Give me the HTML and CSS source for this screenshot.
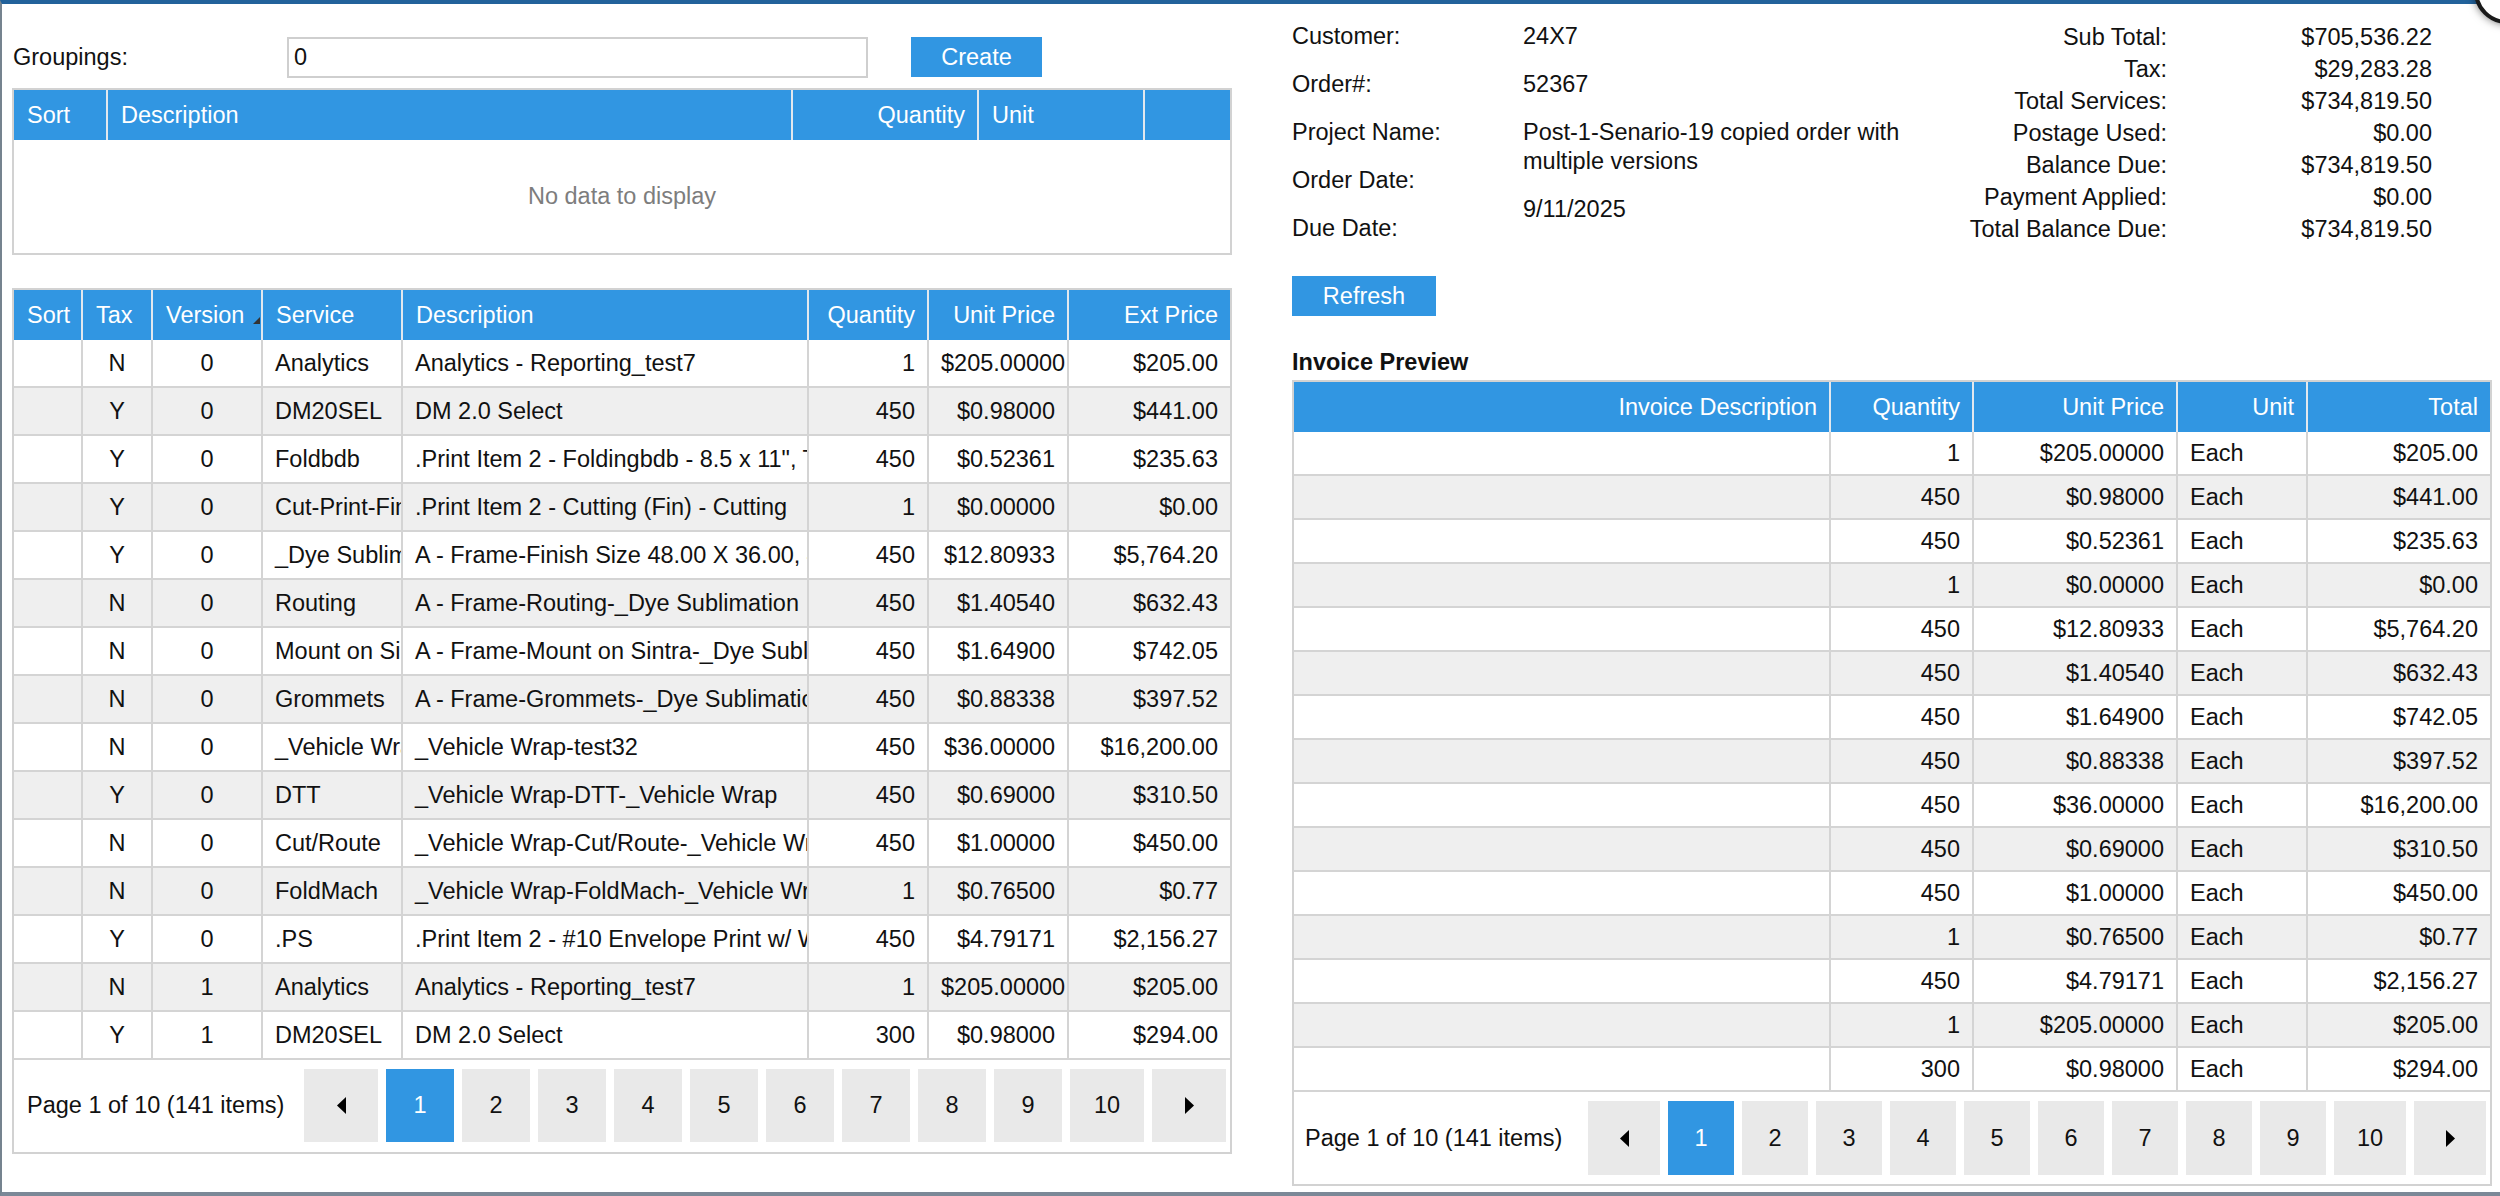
FILE: index.html
```html
<!DOCTYPE html>
<html lang="en">
<head>
    <meta charset="UTF-8">
    <title>Order Invoice</title>
    <link rel="stylesheet" href="styles.css">
</head>
<body>
    <div class="dialog">
        <!-- left: groupings and services -->
        <div class="left-panel">
            <div class="groupings-row">
                <label class="groupings-label" for="groupings">Groupings:</label>
                <input type="text" id="groupings" class="groupings-input" value="0">
                <button class="btn btn-create">Create</button>
            </div>

            <div class="grid groupings-grid">
                <table>
                    <colgroup>
                        <col style="width:94px"><col style="width:685px"><col style="width:186px"><col style="width:166px"><col style="width:85px">
                    </colgroup>
                    <thead>
                        <tr><th>Sort</th><th>Description</th><th class="num">Quantity</th><th>Unit</th><th></th></tr>
                    </thead>
                </table>
                <div class="empty">No data to display</div>
            </div>

            <div class="grid services-grid">
                <table>
                    <colgroup>
                        <col style="width:69px"><col style="width:70px"><col style="width:110px"><col style="width:140px"><col style="width:406px"><col style="width:120px"><col style="width:140px"><col style="width:161px">
                    </colgroup>
                    <thead>
                        <tr>
                            <th>Sort</th><th>Tax</th>
                            <th>Version<svg class="sort-glyph" width="9" height="9" viewBox="0 0 9 9"><polygon points="1,8 8,8 8,1" fill="#333"/></svg></th>
                            <th>Service</th><th>Description</th><th class="num">Quantity</th><th class="num">Unit Price</th><th class="num">Ext Price</th>
                        </tr>
                    </thead>
                    <tbody>
                        <tr><td></td><td class="mid">N</td><td class="mid">0</td><td>Analytics</td><td>Analytics - Reporting_test7</td><td class="num">1</td><td class="num">$205.00000</td><td class="num">$205.00</td></tr>
                        <tr><td></td><td class="mid">Y</td><td class="mid">0</td><td>DM20SEL</td><td>DM 2.0 Select</td><td class="num">450</td><td class="num">$0.98000</td><td class="num">$441.00</td></tr>
                        <tr><td></td><td class="mid">Y</td><td class="mid">0</td><td>Foldbdb</td><td>.Print Item 2 - Foldingbdb - 8.5 x 11", Tri-Fold</td><td class="num">450</td><td class="num">$0.52361</td><td class="num">$235.63</td></tr>
                        <tr><td></td><td class="mid">Y</td><td class="mid">0</td><td>Cut-Print-Fin</td><td>.Print Item 2 - Cutting (Fin) - Cutting</td><td class="num">1</td><td class="num">$0.00000</td><td class="num">$0.00</td></tr>
                        <tr><td></td><td class="mid">Y</td><td class="mid">0</td><td>_Dye Sublimation</td><td>A - Frame-Finish Size 48.00 X 36.00, 4/0</td><td class="num">450</td><td class="num">$12.80933</td><td class="num">$5,764.20</td></tr>
                        <tr><td></td><td class="mid">N</td><td class="mid">0</td><td>Routing</td><td>A - Frame-Routing-_Dye Sublimation</td><td class="num">450</td><td class="num">$1.40540</td><td class="num">$632.43</td></tr>
                        <tr><td></td><td class="mid">N</td><td class="mid">0</td><td>Mount on Sintra</td><td>A - Frame-Mount on Sintra-_Dye Sublimation</td><td class="num">450</td><td class="num">$1.64900</td><td class="num">$742.05</td></tr>
                        <tr><td></td><td class="mid">N</td><td class="mid">0</td><td>Grommets</td><td>A - Frame-Grommets-_Dye Sublimation</td><td class="num">450</td><td class="num">$0.88338</td><td class="num">$397.52</td></tr>
                        <tr><td></td><td class="mid">N</td><td class="mid">0</td><td>_Vehicle Wrap</td><td>_Vehicle Wrap-test32</td><td class="num">450</td><td class="num">$36.00000</td><td class="num">$16,200.00</td></tr>
                        <tr><td></td><td class="mid">Y</td><td class="mid">0</td><td>DTT</td><td>_Vehicle Wrap-DTT-_Vehicle Wrap</td><td class="num">450</td><td class="num">$0.69000</td><td class="num">$310.50</td></tr>
                        <tr><td></td><td class="mid">N</td><td class="mid">0</td><td>Cut/Route</td><td>_Vehicle Wrap-Cut/Route-_Vehicle Wrap</td><td class="num">450</td><td class="num">$1.00000</td><td class="num">$450.00</td></tr>
                        <tr><td></td><td class="mid">N</td><td class="mid">0</td><td>FoldMach</td><td>_Vehicle Wrap-FoldMach-_Vehicle Wrap</td><td class="num">1</td><td class="num">$0.76500</td><td class="num">$0.77</td></tr>
                        <tr><td></td><td class="mid">Y</td><td class="mid">0</td><td>.PS</td><td>.Print Item 2 - #10 Envelope Print w/ Window</td><td class="num">450</td><td class="num">$4.79171</td><td class="num">$2,156.27</td></tr>
                        <tr><td></td><td class="mid">N</td><td class="mid">1</td><td>Analytics</td><td>Analytics - Reporting_test7</td><td class="num">1</td><td class="num">$205.00000</td><td class="num">$205.00</td></tr>
                        <tr><td></td><td class="mid">Y</td><td class="mid">1</td><td>DM20SEL</td><td>DM 2.0 Select</td><td class="num">300</td><td class="num">$0.98000</td><td class="num">$294.00</td></tr>
                    </tbody>
                </table>
                <div class="pager">
                    <span class="pager-info">Page 1 of 10 (141 items)</span>
                    <div class="pager-buttons">
                        <span class="page-btn wide"><svg width="9" height="17" viewBox="0 0 9 17"><polygon points="9,0 9,17 0,8.5" fill="#000"/></svg></span>
                        <span class="page-btn active">1</span>
                        <span class="page-btn">2</span>
                        <span class="page-btn">3</span>
                        <span class="page-btn">4</span>
                        <span class="page-btn">5</span>
                        <span class="page-btn">6</span>
                        <span class="page-btn">7</span>
                        <span class="page-btn">8</span>
                        <span class="page-btn">9</span>
                        <span class="page-btn wide">10</span>
                        <span class="page-btn wide"><svg width="9" height="17" viewBox="0 0 9 17"><polygon points="0,0 0,17 9,8.5" fill="#000"/></svg></span>
                    </div>
                </div>
            </div>
        </div>

        <!-- right: order info and invoice preview -->
        <div class="right-panel">
            <div class="order-info">
                <div class="info-labels">
                    <div>Customer:</div>
                    <div>Order#:</div>
                    <div>Project Name:</div>
                    <div>Order Date:</div>
                    <div>Due Date:</div>
                </div>
                <div class="info-values">
                    <div>24X7</div>
                    <div>52367</div>
                    <div>Post-1-Senario-19 copied order with multiple versions</div>
                    <div>9/11/2025</div>
                </div>
                <div class="totals">
                    <span>Sub Total:</span><span>$705,536.22</span>
                    <span>Tax:</span><span>$29,283.28</span>
                    <span>Total Services:</span><span>$734,819.50</span>
                    <span>Postage Used:</span><span>$0.00</span>
                    <span>Balance Due:</span><span>$734,819.50</span>
                    <span>Payment Applied:</span><span>$0.00</span>
                    <span>Total Balance Due:</span><span>$734,819.50</span>
                </div>
            </div>

            <button class="btn btn-refresh">Refresh</button>

            <div class="section-title">Invoice Preview</div>
            <div class="grid invoice-grid">
                <table>
                    <colgroup>
                        <col style="width:537px"><col style="width:143px"><col style="width:204px"><col style="width:130px"><col style="width:182px">
                    </colgroup>
                    <thead>
                        <tr><th class="num">Invoice Description</th><th class="num">Quantity</th><th class="num">Unit Price</th><th class="num">Unit</th><th class="num">Total</th></tr>
                    </thead>
                    <tbody>
                        <tr><td></td><td class="num">1</td><td class="num">$205.00000</td><td>Each</td><td class="num">$205.00</td></tr>
                        <tr><td></td><td class="num">450</td><td class="num">$0.98000</td><td>Each</td><td class="num">$441.00</td></tr>
                        <tr><td></td><td class="num">450</td><td class="num">$0.52361</td><td>Each</td><td class="num">$235.63</td></tr>
                        <tr><td></td><td class="num">1</td><td class="num">$0.00000</td><td>Each</td><td class="num">$0.00</td></tr>
                        <tr><td></td><td class="num">450</td><td class="num">$12.80933</td><td>Each</td><td class="num">$5,764.20</td></tr>
                        <tr><td></td><td class="num">450</td><td class="num">$1.40540</td><td>Each</td><td class="num">$632.43</td></tr>
                        <tr><td></td><td class="num">450</td><td class="num">$1.64900</td><td>Each</td><td class="num">$742.05</td></tr>
                        <tr><td></td><td class="num">450</td><td class="num">$0.88338</td><td>Each</td><td class="num">$397.52</td></tr>
                        <tr><td></td><td class="num">450</td><td class="num">$36.00000</td><td>Each</td><td class="num">$16,200.00</td></tr>
                        <tr><td></td><td class="num">450</td><td class="num">$0.69000</td><td>Each</td><td class="num">$310.50</td></tr>
                        <tr><td></td><td class="num">450</td><td class="num">$1.00000</td><td>Each</td><td class="num">$450.00</td></tr>
                        <tr><td></td><td class="num">1</td><td class="num">$0.76500</td><td>Each</td><td class="num">$0.77</td></tr>
                        <tr><td></td><td class="num">450</td><td class="num">$4.79171</td><td>Each</td><td class="num">$2,156.27</td></tr>
                        <tr><td></td><td class="num">1</td><td class="num">$205.00000</td><td>Each</td><td class="num">$205.00</td></tr>
                        <tr><td></td><td class="num">300</td><td class="num">$0.98000</td><td>Each</td><td class="num">$294.00</td></tr>
                    </tbody>
                </table>
                <div class="pager">
                    <span class="pager-info">Page 1 of 10 (141 items)</span>
                    <div class="pager-buttons">
                        <span class="page-btn wide"><svg width="9" height="17" viewBox="0 0 9 17"><polygon points="9,0 9,17 0,8.5" fill="#000"/></svg></span>
                        <span class="page-btn active">1</span>
                        <span class="page-btn">2</span>
                        <span class="page-btn">3</span>
                        <span class="page-btn">4</span>
                        <span class="page-btn">5</span>
                        <span class="page-btn">6</span>
                        <span class="page-btn">7</span>
                        <span class="page-btn">8</span>
                        <span class="page-btn">9</span>
                        <span class="page-btn wide">10</span>
                        <span class="page-btn wide"><svg width="9" height="17" viewBox="0 0 9 17"><polygon points="0,0 0,17 9,8.5" fill="#000"/></svg></span>
                    </div>
                </div>
            </div>
        </div>
    </div>
    <div class="close-btn"></div>
</body>
</html>
```

FILE: styles.css
```css
html, body {
    margin: 0;
    overflow: hidden;
}
body {
    font-family: "Liberation Sans", Arial, Helvetica, sans-serif;
    font-size: 23.5px;
    color: #111;
    background: #fff;
    position: relative;
}
.dialog {
    height: 1196px;
    box-sizing: border-box;
    border-top: 4px solid #22629b;
    border-left: 2px solid #75838f;
    border-bottom: 4px solid #7b8897;
    padding-left: 10px;
    display: flex;
    gap: 60px;
}
.close-btn {
    position: absolute;
    top: -42px;
    right: -40px;
    width: 58px;
    height: 58px;
    border-radius: 50%;
    background: #fff;
    border: 4px solid #1a1a1a;
    box-shadow: 0 0 8px rgba(0, 0, 0, 0.55);
}

/* left panel */
.left-panel {
    width: 1220px;
}
.groupings-row {
    display: flex;
    align-items: center;
    height: 42px;
    margin-top: 32px;
}
.groupings-label {
    width: 275px;
    padding-left: 1px;
    box-sizing: border-box;
}
.groupings-input {
    width: 581px;
    height: 41px;
    box-sizing: border-box;
    border: 2px solid #cfcfcf;
    padding: 0 5px;
    font: inherit;
    color: #111;
    outline: none;
}
.btn {
    background-color: #3196e2;
    color: #fff;
    border: none;
    font: inherit;
    height: 40px;
    padding: 0 30px;
    cursor: pointer;
}
.btn-create {
    margin-left: 43px;
    width: 131px;
    padding: 0;
}

.grid {
    border: 2px solid #d2d2d2;
    background: #fff;
}
.grid table {
    width: 100%;
    table-layout: fixed;
    border-spacing: 0;
}
.grid th {
    background-color: #3196e2;
    color: #fff;
    font-weight: normal;
    text-align: left;
    height: 50px;
    padding: 0 12px 0 13px;
    border-right: 2px solid #e2e8ee;
    white-space: nowrap;
    overflow: hidden;
}
.grid th:last-child {
    border-right: none;
}
.grid td {
    height: 46px;
    padding: 0 12px;
    border-right: 2px solid #d4d4d4;
    border-bottom: 2px solid #d4d4d4;
    white-space: nowrap;
    overflow: hidden;
}
.grid td:last-child {
    border-right: none;
}
.grid tbody tr:nth-child(even) td {
    background-color: #efefef;
}
.grid .num {
    text-align: right;
}
.grid .mid {
    text-align: center;
}
.sort-glyph {
    margin-left: 8px;
    vertical-align: -2px;
}

.groupings-grid {
    margin-top: 10px;
}
.empty {
    height: 113px;
    display: flex;
    align-items: center;
    justify-content: center;
    color: #7d7d7d;
}
.services-grid {
    margin-top: 33px;
}

.pager {
    display: flex;
    align-items: center;
    justify-content: space-between;
    padding: 9px 4px 10px 13px;
}
.pager-buttons {
    display: flex;
    gap: 8px;
}
.page-btn {
    display: flex;
    align-items: center;
    justify-content: center;
    width: 68px;
    height: 73px;
    background-color: #e9e9e9;
    color: #111;
}
.page-btn.wide {
    width: 74px;
}
.page-btn.active {
    background-color: #3196e2;
    color: #fff;
}

/* right panel */
.right-panel {
    width: 1200px;
}
.order-info {
    display: flex;
    margin-top: 9px;
}
.info-labels {
    width: 231px;
}
.info-values {
    width: 420px;
}
.info-labels div,
.info-values div {
    padding: 9px 0 10px;
    line-height: 29px;
}
.totals {
    margin-left: auto;
    margin-right: 60px;
    margin-top: 8px;
    display: grid;
    grid-template-columns: auto 265px;
    line-height: 32px;
    text-align: right;
    align-content: start;
}
.btn-refresh {
    display: block;
    margin-top: 23px;
    width: 144px;
    padding: 0;
}
.section-title {
    font-weight: bold;
    line-height: 29px;
    margin-top: 32px;
}
.invoice-grid {
    margin-top: 3px;
}
.invoice-grid td {
    height: 42px;
}
.invoice-grid .pager {
    padding: 9px 4px 9px 11px;
}
.invoice-grid .page-btn {
    width: 66px;
    height: 74px;
}
.invoice-grid .page-btn.wide {
    width: 72px;
}
```
